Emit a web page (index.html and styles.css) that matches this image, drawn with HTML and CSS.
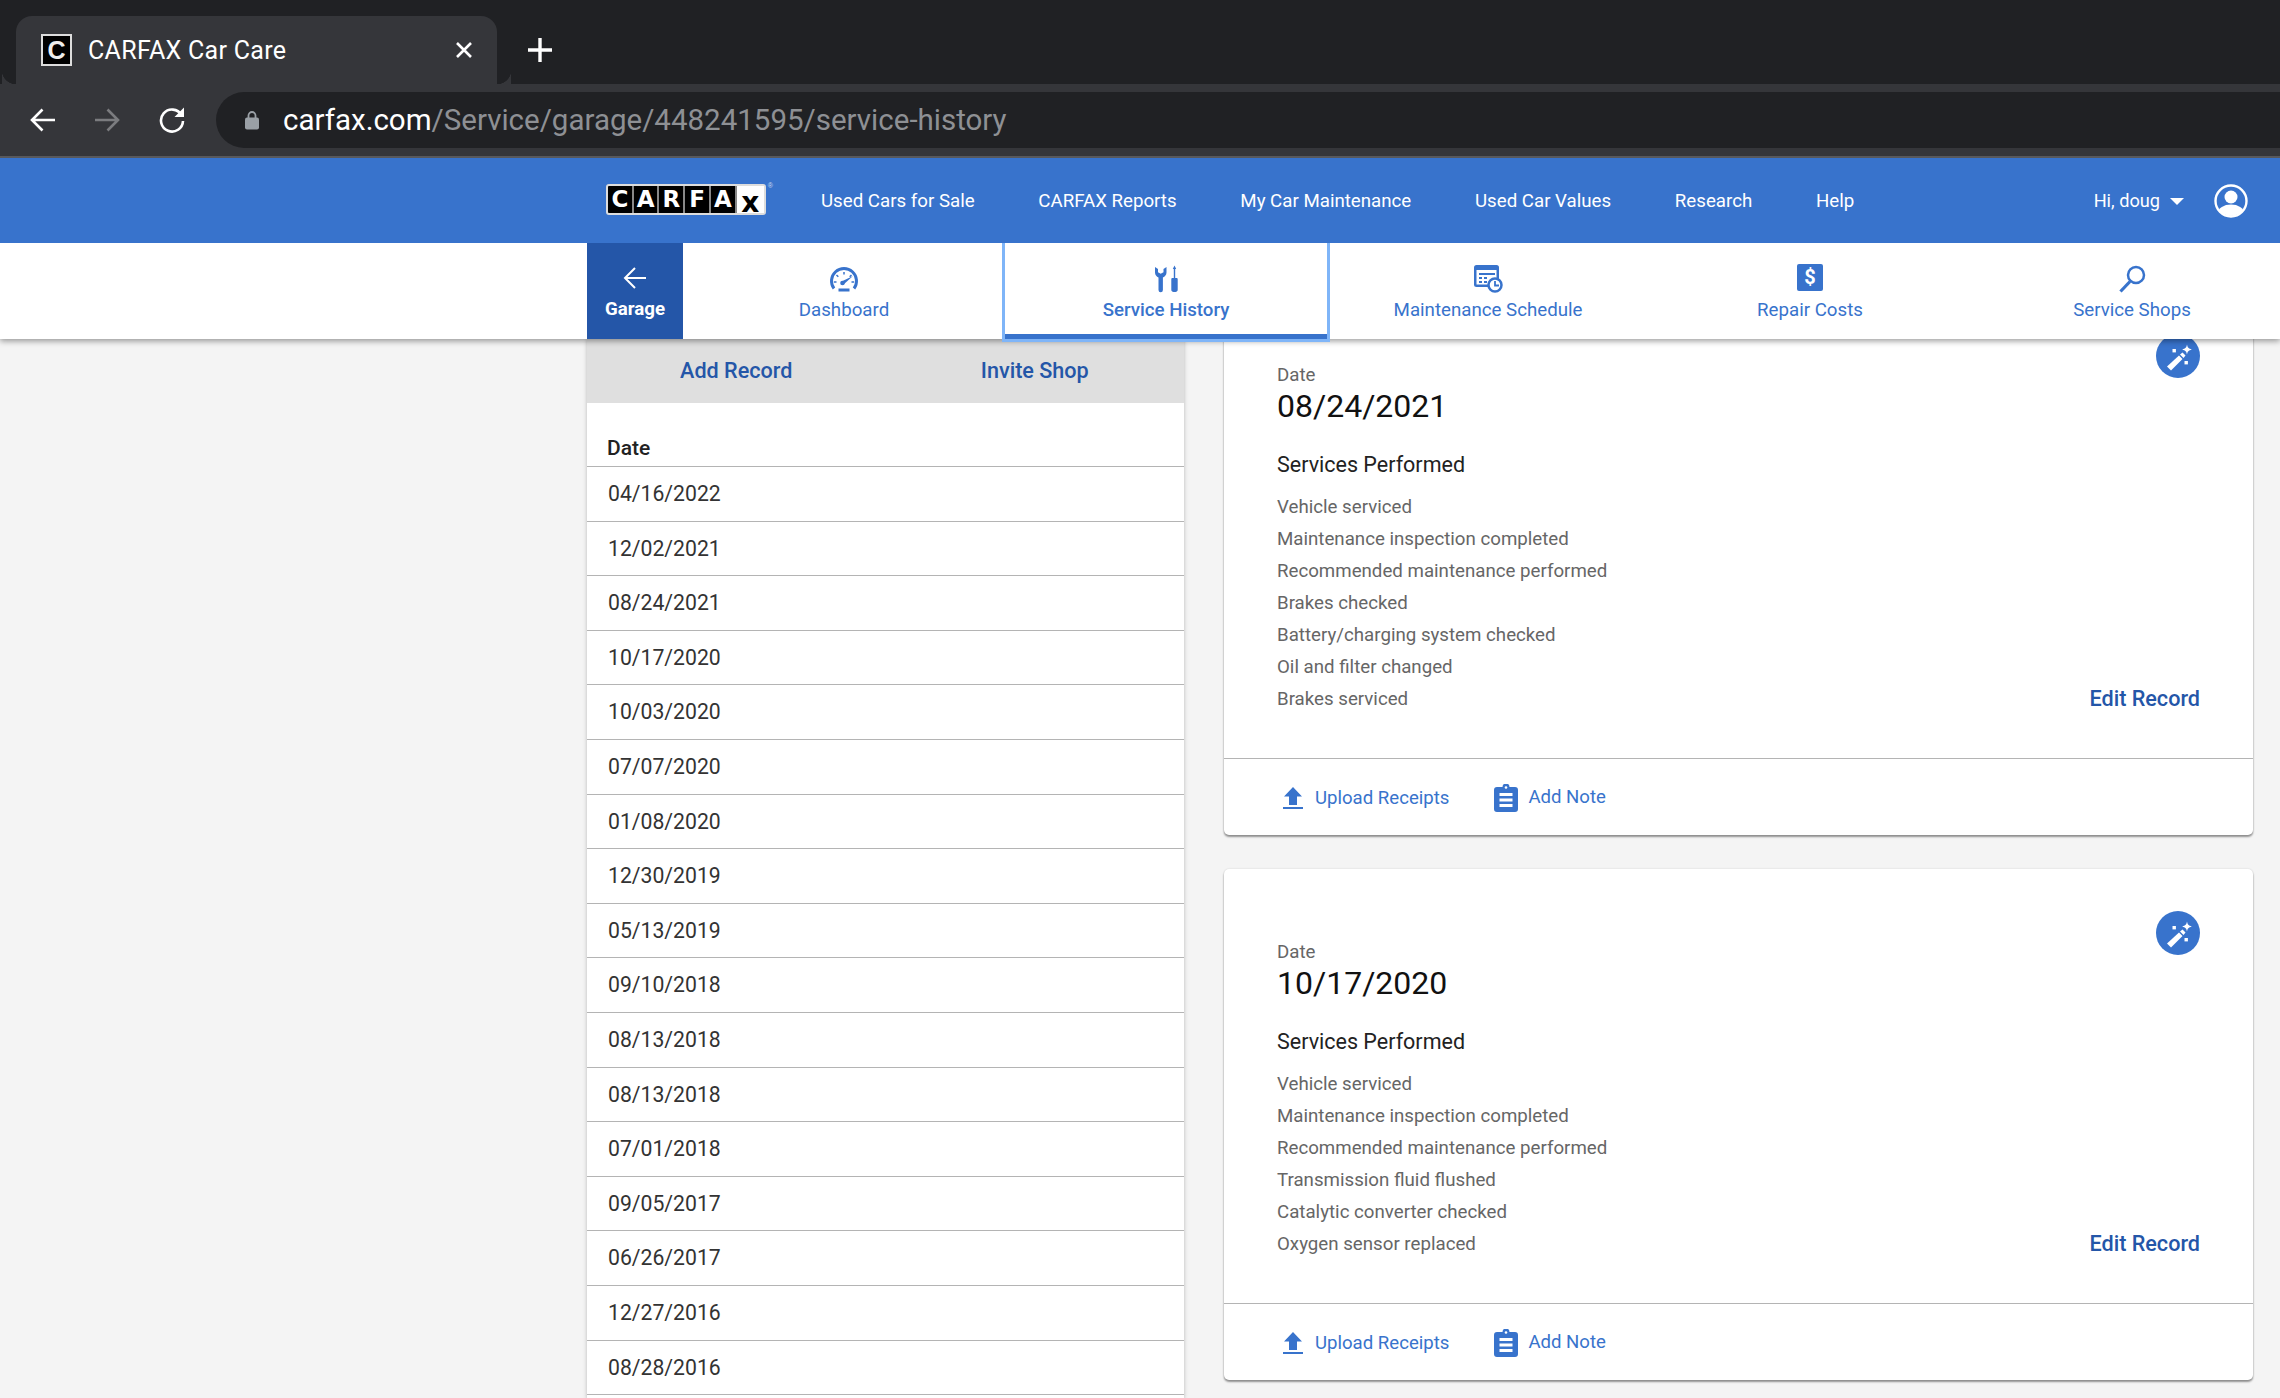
FILE: index.html
```html
<!DOCTYPE html>
<html>
<head>
  <meta name="viewport" content="width=device-width, initial-scale=1">
  <title>CARFAX Car Care</title>
  <link rel="stylesheet" href="styles.css">
</head>
<body>
  <div class="tabstrip">
    <div class="tab">
      <span class="favicon">C</span>
      <span class="tab-title">CARFAX Car Care</span>
      <svg class="tab-close" width="18" height="18" viewBox="0 0 18 18"><path d="M2 2l14 14M16 2L2 16" stroke="#fff" stroke-width="2.600"/></svg>
    </div>
    <svg class="new-tab" width="24" height="24" viewBox="0 0 24 24"><path d="M12 0v24M0 12h24" stroke="#fff" stroke-width="3.400"/></svg>
  </div>
  <div class="toolbar">
    <svg class="tool" width="26" height="26" viewBox="0 0 26 26"><path d="M25 13H2M12.500 2.500L2 13l10.500 10.500" fill="none" stroke="#fff" stroke-width="2.600"/></svg>
    <svg class="tool" width="26" height="26" viewBox="0 0 26 26"><path d="M1 13h23M13.500 2.500L24 13 13.500 23.500" fill="none" stroke="#7b7c7f" stroke-width="2.600"/></svg>
    <svg class="tool" width="28" height="28" viewBox="0 0 28 28"><path d="M23.500 9A11 11 0 1 0 25 15" fill="none" stroke="#fff" stroke-width="2.600"/><path d="M26 1.500V11H16.500z" fill="#fff"/></svg>
    <div class="urlbar">
      <svg width="16" height="20" viewBox="0 0 16 20"><path d="M4.500 8V5.500a3.500 3.500 0 0 1 7 0V8" fill="none" stroke="#9aa0a6" stroke-width="1.800"/><rect x="1" y="7.500" width="14" height="12" rx="2" fill="#9aa0a6"/></svg>
      <span class="url"><b>carfax.com</b>/Service/garage/448241595/service-history</span>
    </div>
  </div>

  <header class="topnav">
    <div class="logo">
      <span>C</span><span>A</span><span>R</span><span>F</span><span>A</span><span class="logo-x">x</span>
      <i class="logo-reg">®</i>
    </div>
    <a href="#">Used Cars for Sale</a>
    <a href="#">CARFAX Reports</a>
    <a href="#">My Car Maintenance</a>
    <a href="#">Used Car Values</a>
    <a href="#">Research</a>
    <a href="#">Help</a>
    <div class="user">
      <span>Hi, doug</span>
      <span class="caret"></span>
      <svg width="34" height="34" viewBox="0 0 34 34"><defs><clipPath id="ring"><circle cx="17" cy="17" r="15"/></clipPath></defs><circle cx="17" cy="17" r="15.500" fill="none" stroke="#fff" stroke-width="2.400"/><circle cx="17" cy="13" r="6.500" fill="#fff"/><ellipse cx="17" cy="29" rx="13" ry="8.500" fill="#fff" clip-path="url(#ring)"/></svg>
    </div>
  </header>

  <nav class="subnav">
    <a class="garage" href="#">
      <svg width="24" height="24" viewBox="0 0 24 24"><path d="M23 12H2M12 2L2 12l10 10" fill="none" stroke="#fff" stroke-width="2"/></svg>
      <span>Garage</span>
    </a>
    <a class="subtab" href="#">
      <svg width="30" height="26" viewBox="0 0 30 26"><path d="M5 22.500A12.500 12.500 0 1 1 25 22.500" fill="none" stroke="#3873cc" stroke-width="3"/><path d="M15 6v2.500M7.500 9l1.800 1.800M22.500 9l-1.800 1.800M5 16h2.500M25 16h-2.500" stroke="#3873cc" stroke-width="1.500"/><path d="M12.500 15.500L24 10l-9.500 8.500z" fill="#3873cc"/><circle cx="13.500" cy="17" r="2.300" fill="#3873cc"/><rect x="9.500" y="22.500" width="11" height="3" fill="#3873cc"/></svg>
      <span>Dashboard</span>
    </a>
    <a class="subtab active" href="#">
      <svg width="24" height="27" viewBox="0 0 24 27"><path d="M1 1.500V7c0 2.500 1.500 4 3.500 5v12.500a2.200 2.200 0 0 0 4.400 0V12c2-1 3.600-2.500 3.600-5V1.500L9.500 3.500v3.300L6.700 8.300 4 6.800V3.500z" fill="#3873cc"/><path d="M20.500 0l1.700 3.500h-1v9h1.300c.7 0 1.200.5 1.200 1.200v10.600c0 1.300-1 2.200-2.200 2.200h-2c-1.200 0-2.200-.9-2.200-2.200V13.700c0-.7.500-1.200 1.200-1.200h1.300v-9h-1z" fill="#3873cc"/></svg>
      <span>Service History</span>
    </a>
    <a class="subtab" href="#">
      <svg width="29" height="28" viewBox="0 0 29 28"><rect width="25" height="22" rx="2.500" fill="#3873cc"/><rect x="2.500" y="5" width="20" height="14.500" fill="#fff"/><path d="M5 8h16v2H5zM5 12h3v2H5zM10 12h3v2h-3zM5 16h3v2H5zM10 16h3v2h-3z" fill="#3873cc"/><circle cx="21" cy="20" r="6.500" fill="#fff" stroke="#3873cc" stroke-width="2.500"/><path d="M21 16v4.500h4" fill="none" stroke="#3873cc" stroke-width="1.800"/></svg>
      <span>Maintenance Schedule</span>
    </a>
    <a class="subtab" href="#">
      <span class="dollar">$</span>
      <span>Repair Costs</span>
    </a>
    <a class="subtab" href="#">
      <svg width="28" height="28" viewBox="0 0 28 28"><circle cx="18" cy="10" r="8" fill="none" stroke="#3873cc" stroke-width="2.500"/><path d="M12 16.500L2.500 26.500" stroke="#3873cc" stroke-width="3.200"/></svg>
      <span>Service Shops</span>
    </a>
  </nav>

  <main class="content">
    <aside class="sidebar">
      <div class="side-actions">
        <a href="#">Add Record</a>
        <a href="#">Invite Shop</a>
      </div>
      <div class="side-head">Date</div>
      <ul class="dates">
        <li>04/16/2022</li>
        <li>12/02/2021</li>
        <li>08/24/2021</li>
        <li>10/17/2020</li>
        <li>10/03/2020</li>
        <li>07/07/2020</li>
        <li>01/08/2020</li>
        <li>12/30/2019</li>
        <li>05/13/2019</li>
        <li>09/10/2018</li>
        <li>08/13/2018</li>
        <li>08/13/2018</li>
        <li>07/01/2018</li>
        <li>09/05/2017</li>
        <li>06/26/2017</li>
        <li>12/27/2016</li>
        <li>08/28/2016</li>
      </ul>
    </aside>

    <section class="records">
      <article class="card">
        <button class="wand"><svg width="44" height="44" viewBox="0 0 44 44"><path d="M11 32.500l12-11 3.500 3.500-11.500 11.500z" fill="#fff"/><path d="M24 20.500l2.500-2 3 3-2 2.500z" fill="#fff"/><path d="M31 10.500c.6 3 1.500 4 4.800 5-3.300 1-4.200 2-4.800 5-.6-3-1.500-4-4.800-5 3.300-1 4.200-2 4.800-5z" fill="#fff"/><rect x="16.500" y="15" width="3.400" height="3.400" fill="#fff"/><rect x="28.500" y="27" width="3.400" height="3.400" fill="#fff"/></svg></button>
        <div class="card-body">
          <div class="label">Date</div>
          <div class="big-date">08/24/2021</div>
          <h3>Services Performed</h3>
          <div class="card-row">
            <ul class="services">
              <li>Vehicle serviced</li>
              <li>Maintenance inspection completed</li>
              <li>Recommended maintenance performed</li>
              <li>Brakes checked</li>
              <li>Battery/charging system checked</li>
              <li>Oil and filter changed</li>
              <li>Brakes serviced</li>
            </ul>
            <a class="edit" href="#">Edit Record</a>
          </div>
        </div>
        <div class="card-actions">
          <a class="upload" href="#"><svg width="20" height="22" viewBox="0 0 20 22"><path d="M10 0l9 9.500h-5V18H6V9.500H1z M0 20h20v2H0z" fill="#3873cc"/></svg>Upload Receipts</a>
          <a class="note" href="#"><svg width="24" height="28" viewBox="0 0 24 28"><path d="M3 3h5.500a3.500 3.500 0 0 1 7 0H21a3 3 0 0 1 3 3v19a3 3 0 0 1-3 3H3a3 3 0 0 1-3-3V6a3 3 0 0 1 3-3z" fill="#3873cc"/><path d="M5.500 9h13v3h-13zM5.500 14.500h13v3h-13zM5.500 20h13v3h-13z" fill="#fff"/><circle cx="12" cy="3.500" r="1.300" fill="#fff"/></svg>Add Note</a>
        </div>
      </article>

      <article class="card">
        <button class="wand"><svg width="44" height="44" viewBox="0 0 44 44"><path d="M11 32.500l12-11 3.500 3.500-11.500 11.500z" fill="#fff"/><path d="M24 20.500l2.500-2 3 3-2 2.500z" fill="#fff"/><path d="M31 10.500c.6 3 1.500 4 4.800 5-3.300 1-4.200 2-4.800 5-.6-3-1.500-4-4.800-5 3.300-1 4.200-2 4.800-5z" fill="#fff"/><rect x="16.500" y="15" width="3.400" height="3.400" fill="#fff"/><rect x="28.500" y="27" width="3.400" height="3.400" fill="#fff"/></svg></button>
        <div class="card-body">
          <div class="label">Date</div>
          <div class="big-date">10/17/2020</div>
          <h3>Services Performed</h3>
          <div class="card-row">
            <ul class="services">
              <li>Vehicle serviced</li>
              <li>Maintenance inspection completed</li>
              <li>Recommended maintenance performed</li>
              <li>Transmission fluid flushed</li>
              <li>Catalytic converter checked</li>
              <li>Oxygen sensor replaced</li>
            </ul>
            <a class="edit" href="#">Edit Record</a>
          </div>
        </div>
        <div class="card-actions">
          <a class="upload" href="#"><svg width="20" height="22" viewBox="0 0 20 22"><path d="M10 0l9 9.500h-5V18H6V9.500H1z M0 20h20v2H0z" fill="#3873cc"/></svg>Upload Receipts</a>
          <a class="note" href="#"><svg width="24" height="28" viewBox="0 0 24 28"><path d="M3 3h5.500a3.500 3.500 0 0 1 7 0H21a3 3 0 0 1 3 3v19a3 3 0 0 1-3 3H3a3 3 0 0 1-3-3V6a3 3 0 0 1 3-3z" fill="#3873cc"/><path d="M5.500 9h13v3h-13zM5.500 14.500h13v3h-13zM5.500 20h13v3h-13z" fill="#fff"/><circle cx="12" cy="3.500" r="1.300" fill="#fff"/></svg>Add Note</a>
        </div>
      </article>
    </section>
  </main>
</body>
</html>
```

FILE: styles.css
```css
* { box-sizing: border-box; }
html, body { margin: 0; height: 1398px; overflow: hidden; }
body { background: #f4f4f4; font-family: Roboto, "Liberation Sans", sans-serif; color: #222; }
a { text-decoration: none; color: inherit; }
ul { list-style: none; margin: 0; padding: 0; }

/* browser chrome */
.tabstrip { height: 84px; background: #202124; padding: 16px 0 0 16px; display: flex; align-items: flex-start; }
.tab { position: relative; width: 481px; height: 68px; background: #35363a; border-radius: 16px 16px 0 0; display: flex; align-items: center; padding-left: 25px; }
.tab::before, .tab::after { content: ""; position: absolute; bottom: 0; width: 14px; height: 14px; background: radial-gradient(circle at 0 0, #202124 14px, #35363a 14.500px); }
.tab::before { left: -14px; transform: scaleX(-1); }
.tab::after { right: -14px; }
.favicon { width: 31px; height: 32px; background: #000; border: 2px solid #ddd; color: #eee; font: bold 25px/28px "Liberation Sans", sans-serif; text-align: center; }
.tab-title { margin-left: 16px; font-size: 25px; letter-spacing: .3px; color: #fff; }
.tab-close { margin-left: auto; margin-right: 24px; }
.new-tab { margin: 22px 0 0 31px; }

.toolbar { height: 74px; background: #35363a; border-bottom: 2px solid #58595c; display: flex; align-items: center; padding-left: 30px; }
.tool { margin-right: 38px; flex: none; }
.urlbar { flex: 1; height: 56px; margin-left: -8px; background: #202124; border-radius: 28px 0 0 28px; display: flex; align-items: center; padding-left: 28px; }
.url { margin-left: 23px; font-size: 29.500px; color: #8e9094; white-space: nowrap; }
.url b { font-weight: 400; color: #fff; }

/* blue site nav */
.topnav { position: relative; z-index: 3; height: 85px; background: #3873cc; color: #fff; font-size: 18.700px; display: flex; align-items: center; padding: 0 32px 0 606px; }
.topnav > a { margin-right: 63.700px; white-space: nowrap; }
.logo { position: relative; width: 160px; height: 31px; margin: -3px 55px 0 0; background: #000; border: 2px solid #ddd; border-radius: 3px; display: flex; font: bold 23px/27px "DejaVu Sans", sans-serif; color: #fff; }
.logo span { flex: 1; text-align: center; border-right: 2px solid #888; }
.logo .logo-x { flex: 1.15; background: #fff; color: #000; border: 0; font-size: 28px; line-height: 27px; padding-top: 3px; }
.logo-reg { position: absolute; top: -4px; right: -9px; font: normal 7px/8px "Liberation Sans", sans-serif; color: #cfdcf2; }
.user { margin-left: auto; display: flex; align-items: center; font-size: 18.200px; }
.caret { margin: 2px 30px 0 10px; border: 7px solid transparent; border-top-color: #fff; border-bottom: 0; }

/* sub nav */
.subnav { position: relative; z-index: 2; height: 96px; background: #fff; box-shadow: 0 2px 6px rgba(0,0,0,.4); padding-left: 587px; display: flex; font-size: 18.700px; color: #3873cc; }
.garage { width: 96px; flex: none; background: #2456a8; color: #fff; font-weight: 700; display: flex; flex-direction: column; align-items: center; padding-top: 23px; }
.garage span { margin-top: 7px; line-height: 24px; }
.subtab { width: 322px; flex: none; display: flex; flex-direction: column; align-items: center; padding-top: 21px; }
.subtab svg, .dollar { height: 30px; }
.subtab > span:last-child { margin-top: 4px; line-height: 24px; white-space: nowrap; }
.subtab.active { font-weight: 500; outline: 3px solid #7fb5f8; border-bottom: 5px solid #3873cc; }
.dollar { width: 26px; height: 27px; margin-bottom: 3px; background: #3873cc; border-radius: 2px; color: #fff; font-weight: 700; font-size: 20px; line-height: 27px; text-align: center; }

/* page body */
.content { padding: 0 27px 0 587px; display: flex; align-items: flex-start; }
.sidebar { width: 597px; height: 1060px; flex: none; background: #fff; box-shadow: 0 0 4px rgba(0,0,0,.25); }
.side-actions { height: 64px; background: #dfdfdf; display: flex; font-size: 21.600px; font-weight: 500; color: #2456a8; }
.side-actions a { flex: 1; text-align: center; line-height: 64px; }
.side-head { height: 64px; padding: 31px 0 0 20px; font-size: 21px; font-weight: 500; line-height: 28px; border-bottom: 1px solid #b4b4b4; }
.dates li { height: 54.600px; padding-left: 21px; font-size: 21.200px; line-height: 53px; color: #333; border-bottom: 1px solid #b4b4b4; }

.records { flex: 1; margin: -47px 0 0 40px; display: flex; flex-direction: column; gap: 34px; }
.card { position: relative; background: #fff; border-radius: 5px; box-shadow: 0 2px 2px rgba(0,0,0,.4), 0 0 2px rgba(0,0,0,.15); }
.wand { position: absolute; top: 42px; right: 53px; width: 44px; height: 44px; padding: 0; border: 0; border-radius: 50%; background: #3873cc; }
.wand svg { display: block; }
.card-body { padding: 71px 53px 43px; border-bottom: 1px solid #b4b4b4; }
.label { font-size: 18.700px; line-height: 24px; color: #666; }
.big-date { font-size: 32px; line-height: 38px; color: #111; }
.card h3 { margin: 24px 0 10px; font-size: 21.500px; font-weight: 400; line-height: 32px; color: #222; }
.card-row { display: flex; justify-content: space-between; align-items: flex-end; }
.services li { font-size: 18.700px; line-height: 32px; color: #666; }
.edit { font-size: 21.600px; font-weight: 500; line-height: 32px; color: #2456a8; }
.card-actions { height: 76px; padding: 2px 0 0 59px; display: flex; align-items: center; font-size: 18.600px; color: #3873cc; }
.card-actions a { display: flex; align-items: center; }
.upload svg { margin-right: 12px; }
.note { margin: -2px 0 0 45px; }
.note svg { margin-right: 10px; margin-top: 2px; }
```
